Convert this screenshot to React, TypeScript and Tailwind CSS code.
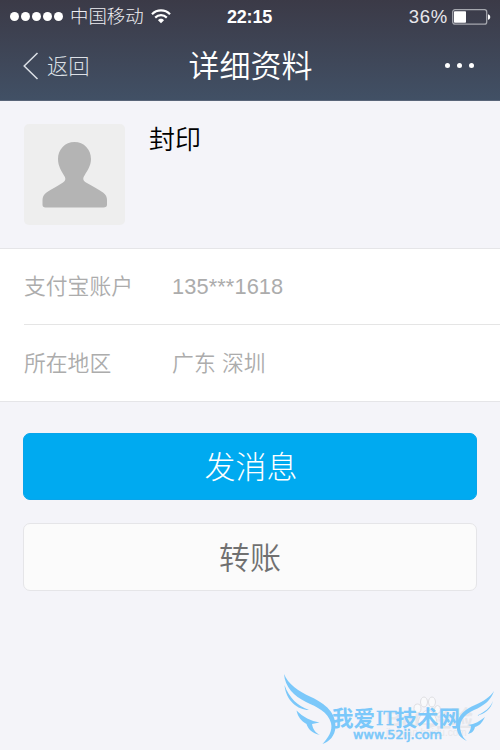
import { ReactNode } from 'react';

const PROFILE = {
  name: '封印',
  fields: [
    { label: '支付宝账户', value: '135***1618' },
    { label: '所在地区', value: '广东 深圳' },
  ],
};

const StatusBar = () => (
  <div className="grid h-8 grid-cols-3 items-center pl-[10px] pr-[9px]">
    <div className="flex items-center">
      <div className="flex gap-[2px]">
        {[0, 1, 2, 3, 4].map((dot) => (
          <span key={dot} className="size-[9px] rounded-full bg-white" />
        ))}
      </div>
      <span className="ml-[7px] pt-px text-[18.4px] font-light leading-8 whitespace-nowrap text-[#eeeef2]">中国移动</span>
      <svg className="ml-[7px] shrink-0" width="20" height="15" viewBox="0 0 20 15" fill="none" stroke="white" strokeWidth="2.2">
        <path d="M1 5.2C6 .2 14 .2 19 5.2" />
        <path d="M4.2 8.6C7.5 5.3 12.5 5.3 15.8 8.6" />
        <path d="M7 11.2C8.7 9.3 11.3 9.3 13 11.2L10 14.2Z" fill="white" stroke="none" />
      </svg>
    </div>
    <span className="pr-[2px] text-center text-[18px] font-bold leading-8 tracking-[-0.2px] text-white">22:15</span>
    <div className="flex items-center justify-end">
      <span className="text-[18.5px] leading-8 tracking-[0.7px] text-[#e8e8ec]">36%</span>
      <svg className="ml-1" width="39" height="16" viewBox="0 0 39 16">
        <rect x=".7" y=".7" width="34" height="14.4" rx="2.2" fill="none" stroke="#a5a7ae" strokeWidth="1.3" />
        <rect x="2" y="2.2" width="12" height="11.5" rx=".8" fill="white" />
        <path d="M36 5.2C39 5.8 39 10.2 36 10.8Z" fill="white" />
      </svg>
    </div>
  </div>
);

const NavBar = () => (
  <div className="grid h-[68px] grid-cols-3 items-center pl-[23px] pr-[26px]">
    <button className="flex items-center text-[#dce0e6]">
      <svg width="16" height="28" viewBox="0 0 16 28" fill="none" stroke="currentColor" strokeWidth="1.5">
        <path d="M14.5 1L1.2 14L14.5 27" />
      </svg>
      <span className="ml-2 pt-[2px] text-[21.3px] font-light leading-8">返回</span>
    </button>
    <h1 className="pl-[4px] pt-px text-center text-[31px] font-[350] leading-10 whitespace-nowrap text-white">详细资料</h1>
    <button className="flex justify-end gap-[7px] pb-px">
      <span className="size-[5px] rounded-full bg-white" />
      <span className="size-[5px] rounded-full bg-white" />
      <span className="size-[5px] rounded-full bg-white" />
    </button>
  </div>
);

const Avatar = () => (
  <div className="size-[101px] rounded-[5px] bg-[#eeeeee]">
    <svg width="101" height="101" viewBox="0 0 101 101" fill="#b4b4b4">
      <path d="M50.5 18C41 18 34 25.5 34 35C34 42 37.5 47 40 51.5C42 54.5 41.8 56.5 39 58.5C33 62.5 27.5 65 22.5 68.5C19.5 71 18.5 73 18.5 76V80.5C18.5 82.7 19.5 83.5 21.5 83.5H79.5C81.8 83.5 83 82.7 83 80.5V76C83 73 82 71 79 68.5C74 65 68 62 62 58.5C59 56.5 58.5 54.5 60.5 51.5C63 47 67 42 67 35C67 25.5 60 18 50.5 18Z" />
    </svg>
  </div>
);

const ActionButton = ({ className, children }: { className: string; children: ReactNode }) => (
  <button className={`flex w-full items-center justify-center rounded-[7px] border pt-[3px] text-[31px] leading-10 ${className}`}>
    {children}
  </button>
);

const Watermark = () => (
  <div className="pointer-events-none absolute bottom-0 right-0 h-[90px] w-[230px]">
    <svg className="absolute inset-0" width="230" height="90" viewBox="270 660 230 90">
      <text x="386" y="726" fontSize="22" fontWeight="700" fill="#e7e7eb">
        Bai
      </text>
      <text x="429" y="726" fontSize="22" fontWeight="700" fill="#e7e7eb">
        经验
      </text>
      <text x="386" y="736" fontSize="10" fill="#e8e8ec">
        jingyan.baidu.com
      </text>
      <g fill="#f9f9fb" stroke="#dfdfe3" strokeWidth="1">
        <ellipse cx="417.500" cy="708.500" rx="3.500" ry="4.500" />
        <ellipse cx="424" cy="702" rx="3.500" ry="5" />
        <ellipse cx="432" cy="702" rx="3.500" ry="5" />
        <ellipse cx="437.500" cy="709.500" rx="3" ry="4" />
        <path d="M418 724C418 717 424 710 428 710C432 710 437 717 437 724Z" />
      </g>
    </svg>
    <svg className="absolute inset-0" width="230" height="90" viewBox="270 660 230 90" fill="#7bc8fa">
      <path d="M284 674C288 684 298 691 311 697C326 704 336 713 335.500 727C335 736 329 742 322.500 744C328 738 333 731 331 723C328 712 317 707 306 702C294 696 285 687 284 674Z" />
      <path d="M284.500 685C289 698 298 706 309 710C298 710 286 701 284.500 685Z" />
      <path d="M296.500 710.500C303 717 311 721 319.500 722.500L312 724C313 730 316 733 320 735C312 733 308 729 306.500 724C301 721 298 717 296.500 710.500Z" />
      <path d="M494 691C491 700 484 706 474 710C463 715 458 723 461 732C462 736 464 739 467 741C460 738 456 733 457 725C458 714 466 709 475 705C484 701 490 697 494 691Z" />
      <path d="M493 701C491 709 485 714 476 716C485 712 490 708 493 701Z" />
      <path d="M485 717C482 723 479 726 475 727C474 731 472 733 468 734C470 731 471 728 471 726L468 725C475 724 480 721 485 717Z" />
      <text x="332" y="725.500" fontSize="21.500" fontWeight="700">
        我爱
      </text>
      <text x="376" y="725" fontSize="22" fontFamily="Liberation Serif, serif" stroke="#7bc8fa" strokeWidth=".5">
        IT
      </text>
      <text x="395.500" y="725.500" fontSize="21.500" fontWeight="700">
        技术网
      </text>
      <text x="353" y="738.500" fontSize="12" fontFamily="DejaVu Sans, sans-serif" stroke="#7bc8fa" strokeWidth=".6" textLength="89" lengthAdjust="spacingAndGlyphs">
        www.52ij.com
      </text>
    </svg>
  </div>
);

export default function App() {
  return (
    <div className="relative h-[750px] w-[500px] overflow-hidden bg-[#f4f4f9] font-['Liberation_Sans','Noto_Sans_CJK_SC',sans-serif]">
      <header className="h-[101px] border-b border-[#596579] bg-linear-to-b from-[#3b3a47] to-[#415065]">
        <StatusBar />
        <NavBar />
      </header>

      <section className="flex h-[147px] gap-6 pl-6 pt-[23px]">
        <Avatar />
        <h2 className="text-[26px] font-[350] leading-[33px] text-black">{PROFILE.name}</h2>
      </section>

      <dl className="border-y border-[#e5e5e8] bg-white pl-6 text-[21.8px] font-[350] text-[#acacac]">
        {PROFILE.fields.map(({ label, value }) => (
          <div key={label} className="flex h-[76px] items-center border-b border-[#e5e5e5] pt-[2px] last:border-b-0">
            <dt className="w-[148px]">{label}</dt>
            <dd className="tracking-[0.1px]">{value}</dd>
          </div>
        ))}
      </dl>

      <div className="flex flex-col gap-[23px] px-[23px] pt-[31px]">
        <ActionButton className="h-[67px] border-[#08a5eb] bg-[#00aaf0] pl-[2px] font-light text-white">发消息</ActionButton>
        <ActionButton className="h-[68px] border-[#e5e5e8] bg-[#fbfbfb] font-[350] text-[#707070]">转账</ActionButton>
      </div>

      <Watermark />
    </div>
  );
}
